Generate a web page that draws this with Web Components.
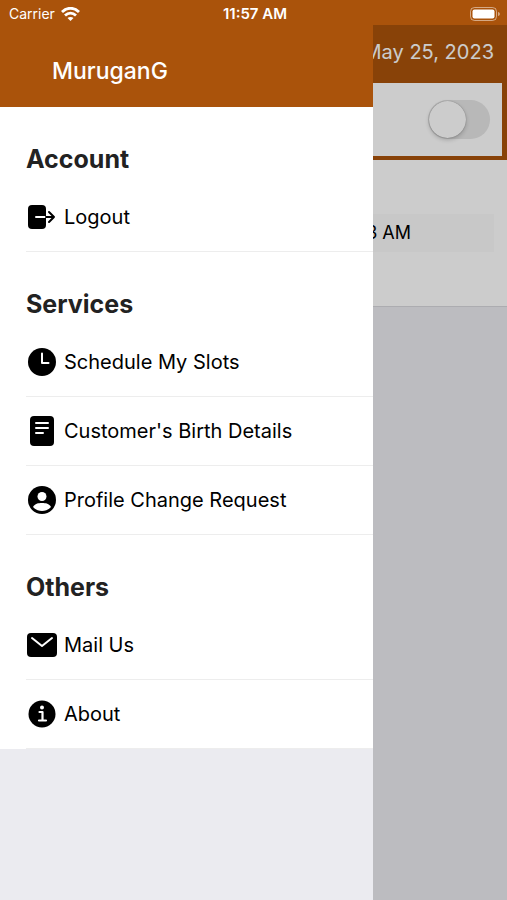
<!DOCTYPE html>
<html lang="en">
<head>
<meta charset="UTF-8">
<meta name="viewport" content="width=device-width, initial-scale=1.0">
<title>MuruganG</title>
<style>
  :root {
    --brand: #aa530b;
    --page: #ebebf0;
    --line: #ededed;
  }

  body {
    margin: 0;
    font-family: Inter, Roboto, "Liberation Sans", sans-serif;
    background: var(--page);
  }
</style>
</head>
<body>
<app-screen>
  <status-bar slot="status" carrier="Carrier" time="11:57 AM"></status-bar>
  <day-panel date="May 25, 2023" time="3 AM"></day-panel>
  <side-drawer slot="drawer" name="MuruganG">
    <menu-section heading="Account">
      <menu-item icon="logout">Logout</menu-item>
    </menu-section>
    <menu-section heading="Services">
      <menu-item icon="clock">Schedule My Slots</menu-item>
      <menu-item icon="document">Customer's Birth Details</menu-item>
      <menu-item icon="profile">Profile Change Request</menu-item>
    </menu-section>
    <menu-section heading="Others">
      <menu-item icon="mail">Mail Us</menu-item>
      <menu-item icon="info">About</menu-item>
    </menu-section>
  </side-drawer>
</app-screen>

<script>
const icons = {
  logout: `
    <rect x="1" y="3" width="18" height="24" rx="4"/>
    <path d="M9 15H19" stroke="#fff" stroke-width="2" stroke-linecap="round"/>
    <path d="M19 15H27M22 10L27 15L22 20" fill="none" stroke="#000" stroke-width="2" stroke-linecap="round" stroke-linejoin="round"/>`,
  clock: `
    <circle cx="15" cy="15" r="14"/>
    <path d="M15 6.5V16H21.500" fill="none" stroke="#fff" stroke-width="2" stroke-linecap="round" stroke-linejoin="round"/>`,
  document: `
    <rect x="3" y="0" width="24" height="30" rx="4"/>
    <path d="M9 7H21M9 12H21M9 17H16" stroke="#fff" stroke-width="2" stroke-linecap="round"/>`,
  profile: `
    <circle cx="15" cy="15" r="14"/>
    <circle cx="15" cy="11.500" r="4.500" fill="#fff"/>
    <path d="M6 22C8 18.600 11 18 15 18S22 18.600 24 22C21.500 24.800 18.500 26 15 26S8.500 24.800 6 22Z" fill="#fff"/>`,
  mail: `
    <rect x="0" y="3" width="30" height="24" rx="4"/>
    <path d="M5 8L15 16L25 8" fill="none" stroke="#fff" stroke-width="2" stroke-linecap="round" stroke-linejoin="round"/>`,
  info: `
    <circle cx="15" cy="15" r="13.500"/>
    <circle cx="15" cy="8.500" r="2" fill="#fff"/>
    <path d="M12.500 13H15.500V21M12 21.500H19" fill="none" stroke="#fff" stroke-width="2.200" stroke-linecap="round" stroke-linejoin="round"/>`
};

class AppScreen extends HTMLElement {
  connectedCallback() {
    this.attachShadow({ mode: 'open' });
    this.shadowRoot.innerHTML = `
      <style>
        :host {
          display: flex;
          flex-direction: column;
          min-height: 100vh;
        }

        .stage {
          position: relative;
          flex: 1;
        }

        .shade {
          position: absolute;
          inset: 0;
          background: rgba(0, 0, 0, 0.2);
        }

        /* the open drawer lies over the page */
        ::slotted(side-drawer) {
          position: absolute;
          inset: 0 134px 0 0;
        }
      </style>
      <slot name="status"></slot>
      <main class="stage">
        <slot></slot>
        <div class="shade"></div>
        <slot name="drawer"></slot>
      </main>
    `;
  }
}

class StatusBar extends HTMLElement {
  connectedCallback() {
    this.attachShadow({ mode: 'open' });
    this.shadowRoot.innerHTML = `
      <style>
        :host {
          display: grid;
          grid-template-columns: 1fr auto 1fr;
          align-items: center;
          height: 25px;
          padding: 2px 6px 0 9px;
          box-sizing: border-box;
          background: var(--brand);
          color: #fff;
          font-size: 14px;
          line-height: 20px;
        }

        .carrier {
          display: flex;
          align-items: center;
          gap: 6px;
        }

        .time {
          font-size: 15px;
          font-weight: 600;
        }

        .battery {
          justify-self: end;
        }

        svg {
          display: block;
        }
      </style>
      <span class="carrier">
        ${this.getAttribute('carrier')}
        <svg width="19" height="14" viewBox="0 0 19 14" fill="none" stroke="#fff" stroke-width="2.800">
          <path d="M1 5C6 0 13 0 18 5"/>
          <path d="M4 8.500C7.300 5.400 11.700 5.400 15 8.500"/>
          <path d="M9.500 14L6.500 11C8.300 9.500 10.700 9.500 12.500 11Z" fill="#fff" stroke="none"/>
        </svg>
      </span>
      <span class="time">${this.getAttribute('time')}</span>
      <svg class="battery" width="31" height="14" viewBox="0 0 31 14">
        <rect x="0.500" y="0.500" width="26" height="13" rx="4" fill="none" stroke="#fff" stroke-opacity="0.500"/>
        <rect x="2.500" y="2.500" width="22" height="9" rx="2" fill="#fff"/>
        <path d="M28 5C30.500 5.500 30.500 8.500 28 9Z" fill="#fff" fill-opacity="0.500"/>
      </svg>
    `;
  }
}

class DayPanel extends HTMLElement {
  connectedCallback() {
    this.attachShadow({ mode: 'open' });
    this.shadowRoot.innerHTML = `
      <style>
        :host {
          display: block;
        }

        header {
          background: var(--brand);
          padding: 0 5px 4px;
        }

        .date {
          padding: 12px 8px 16px;
          color: #fff;
          font-size: 20px;
          line-height: 30px;
          text-align: right;
        }

        .toggle {
          display: flex;
          justify-content: flex-end;
          padding: 17px 12px;
          background: #fff;
        }

        input {
          appearance: none;
          display: flex;
          width: 62px;
          height: 39px;
          margin: 0;
          padding: 1px;
          box-sizing: border-box;
          border-radius: 20px;
          background: #e6e6e6;
        }

        input::before {
          content: "";
          width: 37px;
          height: 37px;
          border-radius: 50%;
          background: #fff;
          box-shadow: 0 2px 4px rgba(0, 0, 0, 0.2), 0 0 1px rgba(0, 0, 0, 0.4);
        }

        input:checked {
          justify-content: flex-end;
          background: #34c759;
        }

        section {
          padding: 54px 13px;
          background: #fff;
          border-bottom: 1px solid #d8d8dc;
        }

        .time {
          padding: 4px 83px 4px 0;
          background: #fafafa;
          font-size: 18px;
          line-height: 30px;
          text-align: right;
        }
      </style>
      <header>
        <div class="date">${this.getAttribute('date')}</div>
        <div class="toggle">
          <input type="checkbox" role="switch" aria-label="${this.getAttribute('date')}">
        </div>
      </header>
      <section>
        <div class="time">${this.getAttribute('time')}</div>
      </section>
    `;
  }
}

class SideDrawer extends HTMLElement {
  connectedCallback() {
    this.attachShadow({ mode: 'open' });
    this.shadowRoot.innerHTML = `
      <style>
        :host {
          display: block;
          background: var(--page);
        }

        header {
          padding: 30px 52px 20px;
          background: var(--brand);
          color: #fff;
          font-size: 23px;
          font-weight: 500;
          line-height: 32px;
        }

        nav {
          background: #fff;
        }
      </style>
      <header>${this.getAttribute('name')}</header>
      <nav><slot></slot></nav>
    `;
  }
}

class MenuSection extends HTMLElement {
  connectedCallback() {
    this.attachShadow({ mode: 'open' });
    this.shadowRoot.innerHTML = `
      <style>
        :host {
          display: block;
          padding-left: 26px;
        }

        h2 {
          margin: 0;
          padding: 36px 0 8px;
          color: #222;
          font-size: 25px;
          font-weight: 700;
          line-height: 32px;
        }
      </style>
      <h2>${this.getAttribute('heading')}</h2>
      <slot></slot>
    `;
  }
}

class MenuItem extends HTMLElement {
  connectedCallback() {
    this.attachShadow({ mode: 'open' });
    this.shadowRoot.innerHTML = `
      <style>
        :host {
          display: block;
        }

        a {
          display: flex;
          align-items: center;
          gap: 7px;
          height: 68px;
          padding-left: 1px;
          border-bottom: 1px solid var(--line);
          color: #000;
          font-size: 20px;
          line-height: 28px;
          text-decoration: none;
        }

        svg {
          flex: none;
        }
      </style>
      <a href="#">
        <svg width="30" height="30" viewBox="0 0 30 30">${icons[this.getAttribute('icon')]}</svg>
        <span><slot></slot></span>
      </a>
    `;
  }
}

customElements.define('app-screen', AppScreen);
customElements.define('status-bar', StatusBar);
customElements.define('day-panel', DayPanel);
customElements.define('side-drawer', SideDrawer);
customElements.define('menu-section', MenuSection);
customElements.define('menu-item', MenuItem);
</script>
</body>
</html>
